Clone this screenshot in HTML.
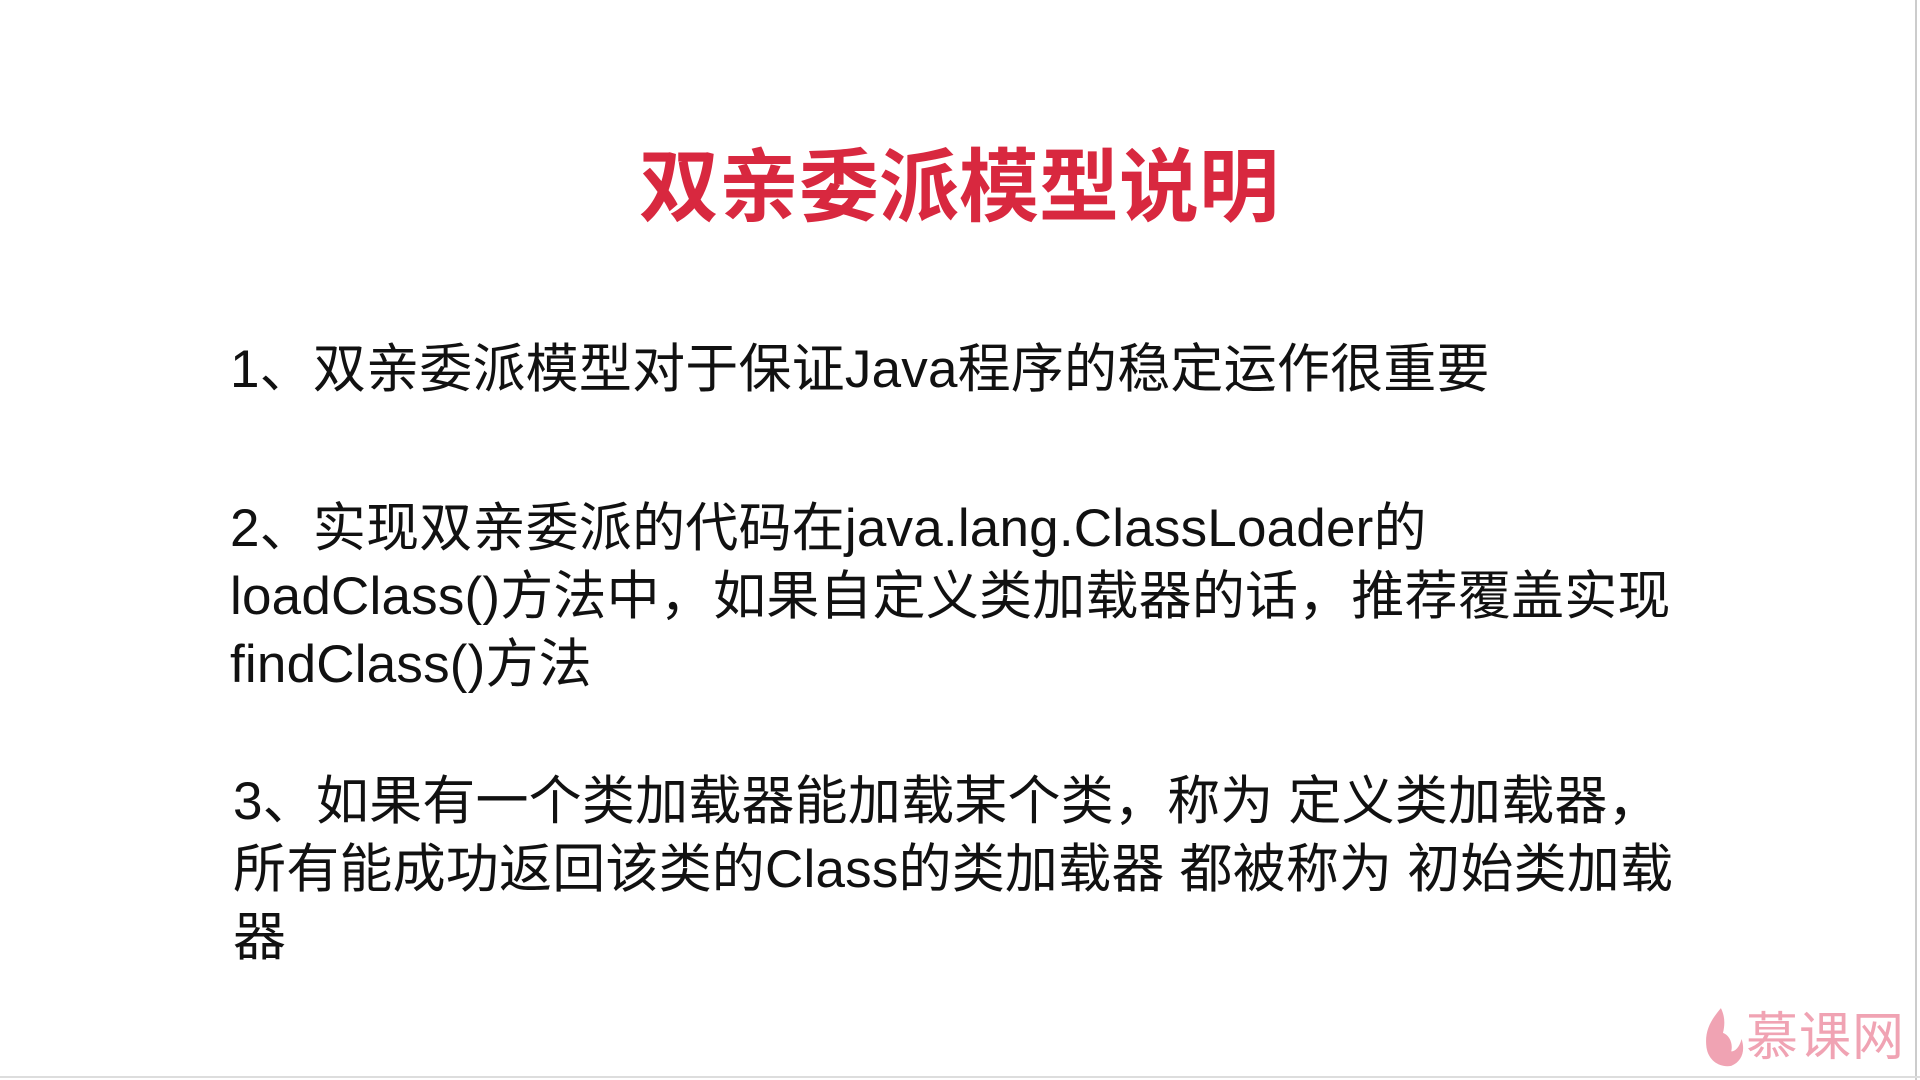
<!DOCTYPE html>
<html><head><meta charset="utf-8"><style>
html,body{margin:0;padding:0;background:#fff;}
body{width:1920px;height:1080px;position:relative;overflow:hidden;font-family:"Liberation Sans","Noto Sans CJK SC",sans-serif;}
.t{position:absolute;left:639px;top:138px;width:640px;text-align:center;font-size:80px;font-weight:bold;color:#d8283f;letter-spacing:0px;white-space:nowrap;line-height:100px;}
.l{position:absolute;left:230px;font-size:53px;letter-spacing:0.2px;color:#111;white-space:nowrap;line-height:68px;}
.logo{position:absolute;left:1746px;top:1006px;font-size:52px;color:#f0a3b3;line-height:64px;letter-spacing:1px;}
.rb{position:absolute;right:3px;top:0;width:2px;height:1080px;background:#ccc;}
.bb{position:absolute;left:0;bottom:2px;width:1920px;height:2px;background:#ddd;}
</style></head><body>
<div class="t">双亲委派模型说明</div>
<div class="l" style="top:336px">1、双亲委派模型对于保证Java程序的稳定运作很重要</div>
<div class="l" style="top:495px">2、实现双亲委派的代码在java.lang.ClassLoader的<br>loadClass()方法中，如果自定义类加载器的话，推荐覆盖实现<br>findClass()方法</div>
<div class="l" style="top:768px;left:233px">3、如果有一个类加载器能加载某个类，称为 定义类加载器，<br>所有能成功返回该类的Class的类加载器 都被称为 初始类加载<br>器</div>
<svg style="position:absolute;left:1702px;top:1006px" width="44" height="64" viewBox="0 0 42 62"><path d="M18 2 C8 14 2 24 4 40 C6 54 18 60 28 58 C38 54 42 44 38 32 C36 40 32 44 28 44 C30 36 26 28 20 26 C22 18 22 10 18 2 Z" fill="#f0a3b3"/></svg>
<div class="logo">慕课网</div>
<div class="rb"></div><div class="bb"></div>
</body></html>
